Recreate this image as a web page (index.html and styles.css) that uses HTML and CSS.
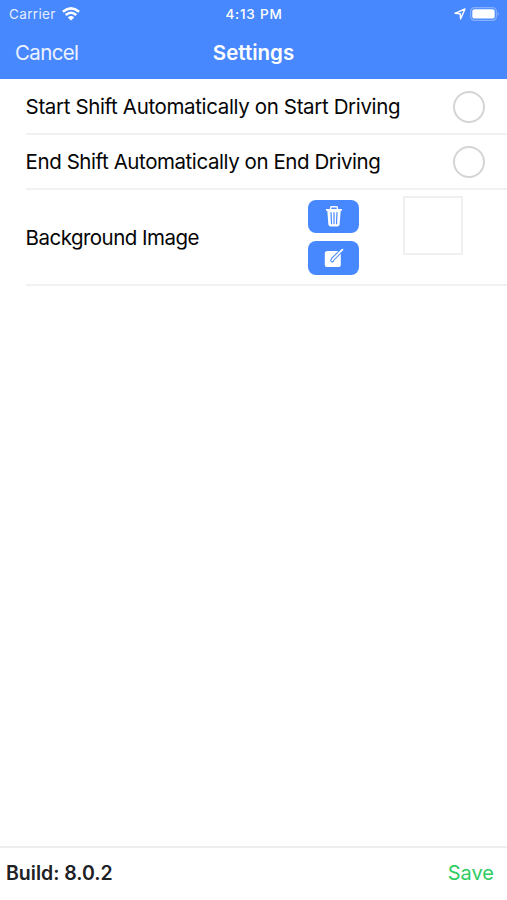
FILE: index.html
```html
<!DOCTYPE html>
<html lang="en">
<head>
<meta charset="utf-8">
<title>Settings</title>
<link rel="stylesheet" href="styles.css">
</head>
<body>
<header class="header">
  <div class="status">
    <div class="carrier"><span>Carrier</span>
      <svg class="wifi" viewBox="0 0 18 14" width="18" height="14" fill="none" stroke="#fff" stroke-width="2.5"><path d="M.9 4.7Q9-2 17.1 4.7"/><path d="M3.7 8Q9 3.5 14.3 8"/><path d="M5.8 10.4Q9 7.7 12.2 10.4L9 13.6Z" fill="#fff" stroke="none"/></svg>
    </div>
    <span class="time">4:13 PM</span>
    <div class="indicators">
      <svg width="12" height="12" viewBox="0 0 12 12" fill="none" stroke="#fff" stroke-width="1.4" stroke-linejoin="round"><path d="M1 5.3L11 1L6.6 10.9L6.2 5.8Z"/></svg>
      <svg width="30" height="14" viewBox="0 0 30 14"><rect x=".6" y=".6" width="25.8" height="12.8" rx="4" fill="none" stroke="#86b0ff" stroke-width="1.2"/><rect x="2.3" y="2.2" width="22.4" height="9.4" rx="2.2" fill="#fff"/><path d="M27.6 4.8Q30 7 27.6 9.2Z" fill="#86b0ff"/></svg>
    </div>
  </div>
  <nav class="nav">
    <span class="cancel">Cancel</span>
    <h1 class="title">Settings</h1>
  </nav>
</header>
<main class="list">
  <div class="row"><span class="label start">Start Shift Automatically on Start Driving</span><span class="radio"></span></div>
  <div class="row"><span class="label end">End Shift Automatically on End Driving</span><span class="radio"></span></div>
  <div class="row image-row">
    <span class="label background">Background Image</span>
    <div class="actions">
      <button class="action" aria-label="Delete"><svg width="18" height="21" viewBox="0 0 18 21"><path d="M5.6 3V1.7Q5.6.8 6.5.8H11.5Q12.4.8 12.4 1.7V3" fill="none" stroke="#fff" stroke-width="1.4"/><path d="M1 3H17V4.8H15.7L14.6 18.6Q14.4 20.4 12.7 20.4H5.3Q3.6 20.4 3.4 18.6L2.3 4.8H1Z" fill="#fff"/><path d="M6 6.5L6.5 17.6M9 6.5V17.6M12 6.5L11.5 17.6" stroke="#4888ff" stroke-width="1.2" stroke-linecap="round"/></svg></button>
      <button class="action" aria-label="Edit"><svg width="20" height="20" viewBox="0 0 20 20"><rect x=".8" y="3" width="16" height="16" rx="2.6" fill="#fff"/><path d="M17.6 2.4L9 11L8.2 12.6" fill="none" stroke="#4888ff" stroke-width="3.8" stroke-linecap="round"/><path d="M18.4 1.7L9.2 10.8L8.2 12.4" fill="none" stroke="#fff" stroke-width="1.8" stroke-linecap="round"/></svg></button>
    </div>
    <div class="preview"></div>
  </div>
</main>
<footer class="footer"><span class="build">Build: 8.0.2</span><span class="save">Save</span></footer>
</body>
</html>
```
FILE: styles.css
```css
* { box-sizing: border-box; }
body { margin: 0; height: 900px; display: flex; flex-direction: column; background: #fff; color: #050505; font-family: Inter, "Liberation Sans", sans-serif; overflow: hidden; }
.header { height: 79px; background: #4888ff; color: #fff; }
.status { display: grid; grid-template-columns: 1fr auto 1fr; align-items: center; height: 27px; padding: 0 8px 0 9px; font-size: 13.5px; }
.carrier { display: flex; align-items: center; gap: 6px; color: #e4edff; letter-spacing: .35px; }
.time { font-size: 13.5px; font-weight: 500; letter-spacing: .8px; }
.indicators { display: flex; align-items: center; justify-content: flex-end; gap: 4px; margin-right: -1px; }
.nav { display: grid; grid-template-columns: 1fr auto 1fr; align-items: center; height: 50px; padding: 0 15px; }
.cancel { font-size: 20.5px; letter-spacing: -.65px; color: #edf3ff; }
.title { margin: 0; font-size: 20.5px; font-weight: 600; }
.list { padding-left: 25.6px; }
.row { display: flex; align-items: center; justify-content: space-between; height: 55.5px; padding: 2px 22px 0 0; border-bottom: 2px solid #f1f1f1; }
.label { font-size: 20.5px; line-height: 24px; white-space: nowrap; }
.start { letter-spacing: -.36px; }
.end { letter-spacing: -.43px; }
.radio { width: 32px; height: 32px; border: 2px solid #d4d4d4; border-radius: 50%; }
.image-row { height: 96px; padding: 1px 44px 0 0; }
.background { width: 282px; letter-spacing: -.52px; }
.actions { display: flex; flex-direction: column; gap: 8px; margin: 0 43px 1px 0; }
.action { display: flex; align-items: center; justify-content: center; width: 51px; height: 33.5px; padding: 0; border: 0; border-radius: 8px; background: #4888ff; }
.preview { width: 60px; height: 59px; align-self: flex-start; margin-top: 5px; border: 2px solid #f0f0f0; }
.footer { display: flex; align-items: center; justify-content: space-between; height: 54px; margin-top: auto; padding: 0 13px 2px 6px; border-top: 2px solid #eee; font-size: 20px; }
.build { font-size: 19.5px; font-weight: 600; color: #202124; }
.save { color: #2dcc61; }
```
